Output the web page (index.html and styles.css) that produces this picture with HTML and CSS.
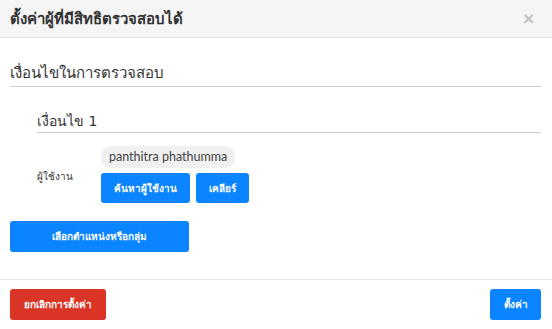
FILE: index.html
```html
<!DOCTYPE html>
<html lang="th">
<head>
    <meta charset="UTF-8">
    <meta name="viewport" content="width=device-width, initial-scale=1.0">
    <title>ตั้งค่าผู้ที่มีสิทธิตรวจสอบได้</title>
    <link rel="stylesheet" href="styles.css">
</head>
<body>
    <div class="modal">
        <div class="modal-header">
            <div class="modal-title">ตั้งค่าผู้ที่มีสิทธิตรวจสอบได้</div>
            <button class="close-btn">&times;</button>
        </div>

        <div class="modal-body">
            <div class="section-title">เงื่อนไขในการตรวจสอบ</div>

            <div class="condition">
                <div class="condition-title">เงื่อนไข 1</div>
                <div class="field-row">
                    <div class="field-label">ผู้ใช้งาน</div>
                    <div class="field-value">
                        <span class="chip">panthitra phathumma</span>
                        <div class="btn-group">
                            <button class="btn btn-blue btn-search">ค้นหาผู้ใช้งาน</button>
                            <button class="btn btn-blue btn-clear">เคลียร์</button>
                        </div>
                    </div>
                </div>
            </div>

            <button class="btn btn-blue btn-select">เลือกตำแหน่งหรือกลุ่ม</button>
        </div>

        <div class="modal-footer">
            <button class="btn btn-red btn-cancel">ยกเลิกการตั้งค่า</button>
            <button class="btn btn-blue btn-save">ตั้งค่า</button>
        </div>
    </div>
</body>
</html>
```

FILE: styles.css
```css
body {
    margin: 0;
    font-family: Tahoma, "DejaVu Sans", "Noto Sans", sans-serif;
    background-color: #ffffff;
    color: #333;
}
.modal {
    width: 552px;
    height: 329px;
    display: flex;
    flex-direction: column;
    background-color: #fff;
}
.modal-header {
    height: 37px;
    display: flex;
    align-items: center;
    justify-content: space-between;
    padding: 0 18px 0 10px;
    background-color: #f5f5f5;
    border-bottom: 1px solid #e3e3e3;
}
.modal-title {
    font-size: 15px;
    font-weight: bold;
    color: #333;
}
.close-btn {
    background: none;
    border: none;
    padding: 0;
    font-size: 19px;
    font-weight: bold;
    color: #c2c2c2;
    line-height: 1;
    cursor: pointer;
}
.modal-body {
    flex: 1;
    padding: 23px 11px 0 10px;
}
.section-title {
    font-size: 15px;
    line-height: 24px;
    padding-bottom: 1px;
    border-bottom: 1px solid #cfcfcf;
}
.condition {
    margin-left: 27px;
    margin-top: 23px;
}
.condition-title {
    font-size: 14px;
    line-height: 22px;
    border-bottom: 1px solid #cfcfcf;
}
.field-row {
    display: flex;
    align-items: center;
    margin-top: 13px;
}
.field-label {
    width: 64px;
    font-size: 10px;
    padding-top: 4px;
}
.field-value {
    display: flex;
    flex-direction: column;
    align-items: flex-start;
    gap: 5px;
}
.chip {
    height: 22px;
    line-height: 22px;
    padding: 0 8px;
    border-radius: 11px;
    background-color: #f0f0f0;
    font-family: Lato, "Open Sans", sans-serif;
    font-size: 12.5px;
    color: #444;
}
.btn-group {
    display: flex;
    gap: 6px;
}
.btn {
    height: 31px;
    border: none;
    border-radius: 3px;
    color: white;
    font-family: inherit;
    font-size: 10px;
    font-weight: bold;
    cursor: pointer;
    padding: 0;
}
.btn-blue {
    background-color: #0a84ff;
}
.btn-red {
    background-color: #d93425;
}
.btn-search {
    width: 89px;
    height: 30px;
}
.btn-clear {
    width: 53px;
    height: 30px;
}
.btn-select {
    display: block;
    width: 179px;
    margin-top: 18px;
}
.modal-footer {
    display: flex;
    justify-content: space-between;
    padding: 9px 11px 9px 10px;
    border-top: 1px solid #e5e5e5;
}
.btn-cancel {
    width: 96px;
}
.btn-save {
    width: 51px;
}
```
